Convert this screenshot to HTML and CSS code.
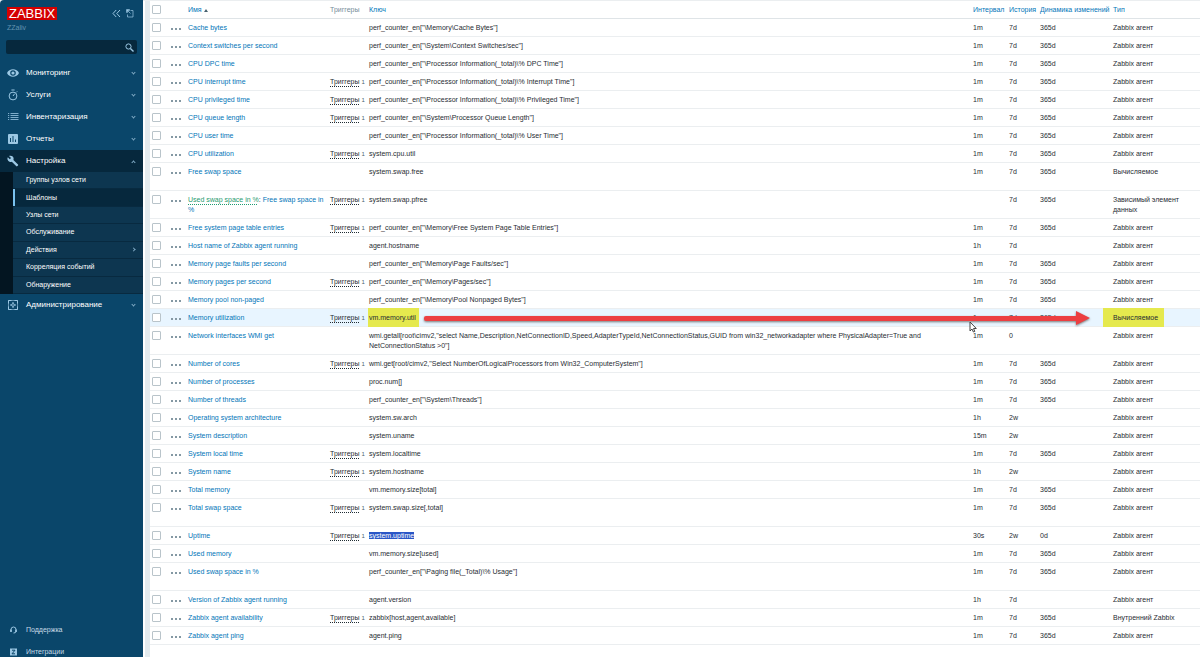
FILE: index.html
```html
<!DOCTYPE html>
<html lang="ru">
<head>
    <meta charset="UTF-8" />
    <meta name="viewport" content="width=device-width, initial-scale=1.0" />
    <title>ZABBIX</title>
    <link rel="stylesheet" href="styles.css">
</head>
<body>
    <!-- Sidebar -->
    <aside class="sidebar">
        <div class="sidebar-header">
            <a class="logo" href="#">ZABBIX</a>
            <button class="icon-btn" aria-label="Свернуть меню">
                <svg width="9" height="9" viewBox="0 0 9 9"><path d="M4.2 1L1 4.5L4.2 8M8 1L4.8 4.5L8 8" /></svg>
            </button>
            <button class="icon-btn" aria-label="Скрыть меню">
                <svg width="8" height="9" viewBox="0 0 8 9"><path d="M4.5 1.5H7V8H1.5V5.5M1 1L4.5 4.5" opacity=".7" /><path d="M1 3.8V1H3.8" stroke-width="1.5" /></svg>
            </button>
        </div>
        <div class="server-name">ZZaliv</div>
        <form class="search">
            <input type="text" aria-label="Поиск">
            <button type="button" class="icon-btn" aria-label="Найти">
                <svg width="9" height="9" viewBox="0 0 9 9"><circle cx="3.5" cy="3.5" r="2.6" /><path d="M5.4 5.4L8.5 8.5" stroke-width="1.4" /></svg>
            </button>
        </form>
        <ul class="menu">
            <li><a href="#">
                <svg width="12" height="12" viewBox="0 0 12 12"><path class="fill" fill-rule="evenodd" d="M0 6C2.2 1 9.8 1 12 6C9.8 11 2.2 11 0 6ZM6 3.2A2.8 2.8 0 1 0 6 8.8A2.8 2.8 0 1 0 6 3.2Z" /><circle class="fill" cx="6" cy="6" r="1.6" /></svg>
                Мониторинг<span class="chevron"></span></a></li>
            <li><a href="#">
                <svg width="12" height="12" viewBox="0 0 12 12"><circle cx="6" cy="7" r="3.9" /><path d="M4.4 1H7.6M6 7L7.6 4.8M9.2 3.4L10.2 2.4" /></svg>
                Услуги<span class="chevron"></span></a></li>
            <li><a href="#">
                <svg width="12" height="12" viewBox="0 0 12 12"><path d="M1 2.5H2.2M3.5 2.5H11.5M1 4.5H2.2M3.5 4.5H11.5M1 6.5H2.2M3.5 6.5H11.5M1 8.5H2.2M3.5 8.5H11.5" stroke-width=".8" /></svg>
                Инвентаризация<span class="chevron"></span></a></li>
            <li><a href="#">
                <svg width="12" height="12" viewBox="0 0 12 12"><rect class="fill" x="1" y="1" width="10" height="10" rx="1" /><path class="dark" d="M3.5 9V5M6 9V3M8.5 9V6.5" /></svg>
                Отчеты<span class="chevron"></span></a></li>
            <li class="open"><a href="#">
                <svg width="12" height="12" viewBox="0 0 12 12"><path class="fill" d="M11 9.6L6.4 5C6.9 3.8 6.6 2.5 5.7 1.6C4.7 .6 3.2 .4 2 1L4 3L2.8 4.3L.8 2.3C.1 3.5 .4 5 1.4 6C2.3 6.9 3.6 7.2 4.8 6.7L9.4 11.3C9.6 11.5 9.9 11.5 10.1 11.3L11 10.4C11.3 10.2 11.3 9.8 11 9.6Z" /></svg>
                Настройка<span class="chevron up"></span></a>
                <ul class="submenu">
                    <li><a href="#">Группы узлов сети</a></li>
                    <li class="selected"><a href="#">Шаблоны</a></li>
                    <li><a href="#">Узлы сети</a></li>
                    <li><a href="#">Обслуживание</a></li>
                    <li><a href="#">Действия<span class="chevron right"></span></a></li>
                    <li><a href="#">Корреляция событий</a></li>
                    <li><a href="#">Обнаружение</a></li>
                </ul>
            </li>
            <li><a href="#">
                <svg width="12" height="12" viewBox="0 0 12 12"><path d="M1.5 1.5H10.5V10.5H1.5Z" opacity=".6" /><path d="M1.5 4.5V1.5H4.5M7.5 1.5H10.5V4.5M10.5 7.5V10.5H7.5M4.5 10.5H1.5V7.5" /><circle cx="6" cy="6" r="1.4" /><path d="M6 3V4M6 8V9M3 6H4M8 6H9" /></svg>
                Администрирование<span class="chevron"></span></a></li>
        </ul>
        <ul class="menu menu-footer">
            <li><a href="#">
                <svg width="12" height="12" viewBox="0 0 12 12"><path d="M4 7.5V5.5A2.5 2.5 0 0 1 9 5.5V7.5Q9 9 6.5 9" /><path d="M4 5.5V8M9 5.5V8" stroke-width="1.6" /></svg>
                Поддержка</a></li>
            <li><a href="#">
                <svg width="12" height="12" viewBox="0 0 12 12"><rect class="fill" x="3" y="2.5" width="7" height="7" /><path class="dark" d="M5 4.2H8L5 7.8H8" /></svg>
                Интеграции</a></li>
        </ul>
    </aside>

    <!-- Items list -->
    <main class="content">
        <table class="items">
            <colgroup>
                <col class="col-check"><col class="col-menu"><col class="col-name"><col class="col-triggers">
                <col><col class="col-interval"><col class="col-history"><col class="col-trends"><col class="col-type">
            </colgroup>
            <thead>
                <tr>
                    <th><input type="checkbox" aria-label="Выбрать все"></th>
                    <th></th>
                    <th><a href="#">Имя<span class="sort"></span></a></th>
                    <th>Триггеры</th>
                    <th><a href="#">Ключ</a></th>
                    <th><a href="#">Интервал</a></th>
                    <th><a href="#">История</a></th>
                    <th><a href="#">Динамика изменений</a></th>
                    <th><a href="#">Тип</a></th>
                </tr>
            </thead>
            <tbody id="items-body"></tbody>
        </table>
    </main>

    <script>
        const AGENT = 'Zabbix агент';
        // name, triggers, key, interval, history, trends, type, options
        const items = [
            ['Cache bytes', 0, 'perf_counter_en["\\Memory\\Cache Bytes"]', '1m', '7d', '365d', AGENT],
            ['Context switches per second', 0, 'perf_counter_en["\\System\\Context Switches/sec"]', '1m', '7d', '365d', AGENT],
            ['CPU DPC time', 0, 'perf_counter_en["\\Processor Information(_total)\\% DPC Time"]', '1m', '7d', '365d', AGENT],
            ['CPU interrupt time', 1, 'perf_counter_en["\\Processor Information(_total)\\% Interrupt Time"]', '1m', '7d', '365d', AGENT],
            ['CPU privileged time', 1, 'perf_counter_en["\\Processor Information(_total)\\% Privileged Time"]', '1m', '7d', '365d', AGENT],
            ['CPU queue length', 1, 'perf_counter_en["\\System\\Processor Queue Length"]', '1m', '7d', '365d', AGENT],
            ['CPU user time', 0, 'perf_counter_en["\\Processor Information(_total)\\% User Time"]', '1m', '7d', '365d', AGENT],
            ['CPU utilization', 1, 'system.cpu.util', '1m', '7d', '365d', AGENT],
            ['Free swap space', 0, 'system.swap.free', '1m', '7d', '365d', 'Вычисляемое', { tall: true }],
            ['Free swap space in %', 1, 'system.swap.pfree', '', '7d', '365d', 'Зависимый элемент данных', { master: 'Used swap space in %' }],
            ['Free system page table entries', 1, 'perf_counter_en["\\Memory\\Free System Page Table Entries"]', '1m', '7d', '365d', AGENT],
            ['Host name of Zabbix agent running', 0, 'agent.hostname', '1h', '7d', '', AGENT],
            ['Memory page faults per second', 0, 'perf_counter_en["\\Memory\\Page Faults/sec"]', '1m', '7d', '365d', AGENT],
            ['Memory pages per second', 1, 'perf_counter_en["\\Memory\\Pages/sec"]', '1m', '7d', '365d', AGENT],
            ['Memory pool non-paged', 0, 'perf_counter_en["\\Memory\\Pool Nonpaged Bytes"]', '1m', '7d', '365d', AGENT],
            ['Memory utilization', 1, 'vm.memory.util', '1m', '7d', '365d', 'Вычисляемое', { marked: true }],
            ['Network interfaces WMI get', 0, 'wmi.getall[root\\cimv2,"select Name,Description,NetConnectionID,Speed,AdapterTypeId,NetConnectionStatus,GUID from win32_networkadapter where PhysicalAdapter=True and NetConnectionStatus >0"]', '1m', '0', '', AGENT],
            ['Number of cores', 1, 'wmi.get[root/cimv2,"Select NumberOfLogicalProcessors from Win32_ComputerSystem"]', '1m', '7d', '365d', AGENT],
            ['Number of processes', 0, 'proc.num[]', '1m', '7d', '365d', AGENT],
            ['Number of threads', 0, 'perf_counter_en["\\System\\Threads"]', '1m', '7d', '365d', AGENT],
            ['Operating system architecture', 0, 'system.sw.arch', '1h', '2w', '', AGENT],
            ['System description', 0, 'system.uname', '15m', '2w', '', AGENT],
            ['System local time', 1, 'system.localtime', '1m', '7d', '365d', AGENT],
            ['System name', 1, 'system.hostname', '1h', '2w', '', AGENT],
            ['Total memory', 0, 'vm.memory.size[total]', '1m', '7d', '365d', AGENT],
            ['Total swap space', 1, 'system.swap.size[,total]', '1m', '7d', '365d', AGENT, { tall: true }],
            ['Uptime', 1, 'system.uptime', '30s', '2w', '0d', AGENT, { picked: true }],
            ['Used memory', 0, 'vm.memory.size[used]', '1m', '7d', '365d', AGENT],
            ['Used swap space in %', 0, 'perf_counter_en["\\Paging file(_Total)\\% Usage"]', '1m', '7d', '365d', AGENT, { tall: true }],
            ['Version of Zabbix agent running', 0, 'agent.version', '1h', '7d', '', AGENT],
            ['Zabbix agent availability', 1, 'zabbix[host,agent,available]', '1m', '7d', '365d', 'Внутренний Zabbix'],
            ['Zabbix agent ping', 0, 'agent.ping', '1m', '7d', '365d', AGENT]
        ];

        const arrow = `<span class="arrow"><span class="arrow-line"></span><svg width="14" height="16" viewBox="0 0 14 16"><path d="M0 1L14 8L0 15Z" /></svg></span>
            <svg class="cursor" width="8" height="12" viewBox="0 0 8 12"><path d="M1 1V10L3 8L4.4 11L5.8 10.4L4.5 7.5H7.3Z" /></svg>`;

        document.getElementById('items-body').innerHTML = items.map(([name, triggers, key, interval, history, trends, type, opt = {}]) => {
            let keyCell = key;
            if (opt.marked) keyCell = `<mark>${key}</mark>${arrow}`;
            if (opt.picked) keyCell = `<span class="picked">${key}</span>`;
            return `<tr class="${opt.marked ? 'hover' : ''}${opt.tall ? 'tall' : ''}">
                <td><input type="checkbox" aria-label="${name}"></td>
                <td><button class="dots" aria-label="Меню"></button></td>
                <td>${opt.master ? `<a class="master" href="#">${opt.master}</a>: ` : ''}<a href="#">${name}</a></td>
                <td class="nowrap">${triggers ? `<button class="triggers">Триггеры</button><sup>${triggers}</sup>` : ''}</td>
                <td class="key">${keyCell}</td>
                <td>${interval}</td>
                <td>${history}</td>
                <td>${trends}</td>
                <td>${opt.marked ? `<mark class="wide">${type}</mark>` : type}</td>
            </tr>`;
        }).join('');
    </script>
</body>
</html>
```
FILE: styles.css
```css
* {
    box-sizing: border-box;
}
body {
    margin: 0;
    display: flex;
    height: 100vh;
    overflow: hidden;
    font-family: "Liberation Sans", Arial, sans-serif;
    font-size: 7px;
    line-height: 10px;
    color: #1f2c33;
    background: #ebeef0;
}
a {
    color: #0275b8;
    text-decoration: none;
}
button {
    padding: 0;
    border: 0;
    background: none;
    font: inherit;
    color: inherit;
    cursor: pointer;
}
ul {
    margin: 0;
    padding: 0;
    list-style: none;
}

/* Sidebar */
.sidebar {
    flex: 0 0 143px;
    display: flex;
    flex-direction: column;
    overflow: hidden;
    background: #0a466a;
    border-top-left-radius: 4px;
}
.sidebar svg {
    display: block;
    flex: none;
    fill: none;
    stroke: #9cc8e4;
    stroke-width: 1;
}
.sidebar .fill {
    fill: #9cc8e4;
    stroke: none;
}
.sidebar .dark {
    stroke: #0a466a;
}
.sidebar-header {
    display: flex;
    align-items: center;
    gap: 5px;
    padding: 7px 9px 0 7px;
}
.logo {
    margin-right: auto;
    padding: 0 2px;
    background: #d40000;
    color: #fff;
    font-size: 13px;
    line-height: 13px;
}
.server-name {
    padding: 3px 7px 0;
    color: #6494b1;
}
.search {
    display: flex;
    align-items: center;
    margin: 7px 6px 8px;
    padding-right: 3px;
    background: #06283d;
    border-radius: 2px;
}
.search input {
    flex: 1;
    min-width: 0;
    height: 14px;
    padding: 0 4px;
    border: 0;
    outline: 0;
    background: none;
    color: #fff;
    font: inherit;
}
.menu a {
    display: flex;
    align-items: center;
    height: 22px;
    padding: 0 7px;
    gap: 7px;
    color: #fff;
    font-size: 8px;
}
.menu .open > a {
    background: #06283d;
}
.chevron {
    width: 3px;
    height: 3px;
    margin: -2px 1px 0 auto;
    border: solid #7fa9c4;
    border-width: 0 1px 1px 0;
    transform: rotate(45deg);
}
.chevron.up {
    margin-top: 2px;
    transform: rotate(225deg);
}
.chevron.right {
    margin-top: 0;
    transform: rotate(-45deg);
}
.submenu {
    display: flex;
    flex-direction: column;
    height: 122px;
    padding-left: 13px;
    background: #031521;
}
.submenu li {
    flex: 1;
    background: #0d3650;
    border-bottom: 1px solid #082a40;
}
.submenu .selected {
    background: #06283d;
    box-shadow: inset 2px 0 #7ac1ee;
}
.submenu a {
    height: 100%;
    padding-left: 13px;
    font-size: 7px;
}
.menu-footer {
    margin: auto 0 -6px;
}
.menu-footer a {
    color: #c8dbe7;
    font-size: 7px;
}

/* Table */
.content {
    flex: 1;
    min-width: 0;
    margin-top: 1px;
    padding-left: 7px;
    background: linear-gradient(90deg, #fff 2px, #e4ebee 2px, #e4ebee 7px, #fff 7px);
}
.items {
    width: 100%;
    table-layout: fixed;
    border-collapse: separate;
    border-spacing: 0;
}
.col-check { width: 18px; }
.col-menu { width: 17px; }
.col-name { width: 142px; }
.col-triggers { width: 39px; }
.col-interval { width: 36px; }
.col-history { width: 31px; }
.col-trends { width: 73px; }
.col-type { width: 90px; }
.items th,
.items td {
    padding: 4px 3px 3px;
    border-bottom: 1px solid #ebeef0;
    text-align: left;
    vertical-align: top;
    font-weight: normal;
}
.items th {
    border-bottom-color: #dfe4e7;
    color: #768d99;
    white-space: nowrap;
}
.items th:first-child,
.items td:first-child {
    padding-left: 2px;
}
.items td.nowrap {
    padding-right: 0;
    white-space: nowrap;
}
.items .tall td {
    padding-bottom: 13px;
}
.items .hover td {
    background: #e8f5ff;
}
.items input {
    display: block;
    appearance: none;
    width: 9px;
    height: 9px;
    margin: 0;
    border: 1px solid #b9c4ca;
    border-radius: 1px;
    background: #fff;
}
.items input:checked {
    background: #0275b8;
}
.sort {
    display: inline-block;
    margin-left: 2px;
    border: 2px solid transparent;
    border-top: 0;
    border-bottom: 3px solid #48626f;
}
.dots {
    display: block;
    width: 10px;
    height: 2px;
    margin-top: 5px;
    background: repeating-linear-gradient(90deg, #8498a3 0 2px, transparent 2px 4px);
}
.master {
    color: #1f9b70;
    text-decoration: underline dotted 1px;
    text-underline-offset: 2px;
}
.triggers {
    line-height: 10px;
    text-decoration: underline dotted 1px;
    text-underline-offset: 2px;
    vertical-align: top;
}
sup {
    margin-left: 2px;
    color: #48626f;
    font-size: 6px;
    line-height: 10px;
    vertical-align: top;
}
mark {
    margin-left: -1px;
    padding: 6px 3px 6px 1px;
    background: #e5e94e;
    color: inherit;
}
mark.wide {
    margin-left: -10px;
    padding: 6px 6px 6px 10px;
}
.picked {
    background: #2a56c6;
    color: #fff;
}

/* Pointer arrow from the key to the item type */
.key {
    position: relative;
}
.arrow {
    position: absolute;
    z-index: 1;
    top: 1px;
    left: 58px;
    right: -120px;
    display: flex;
    align-items: center;
    filter: drop-shadow(0 1px 1px #777);
}
.arrow-line {
    flex: 1;
    height: 5px;
    border-radius: 2px 0 0 2px;
    background: #ec3f42;
}
.arrow svg {
    display: block;
    fill: #ec3f42;
}
.cursor {
    position: absolute;
    z-index: 2;
    top: 12px;
    right: -7px;
    fill: #fff;
    stroke: #444;
    stroke-width: 1;
}
```
